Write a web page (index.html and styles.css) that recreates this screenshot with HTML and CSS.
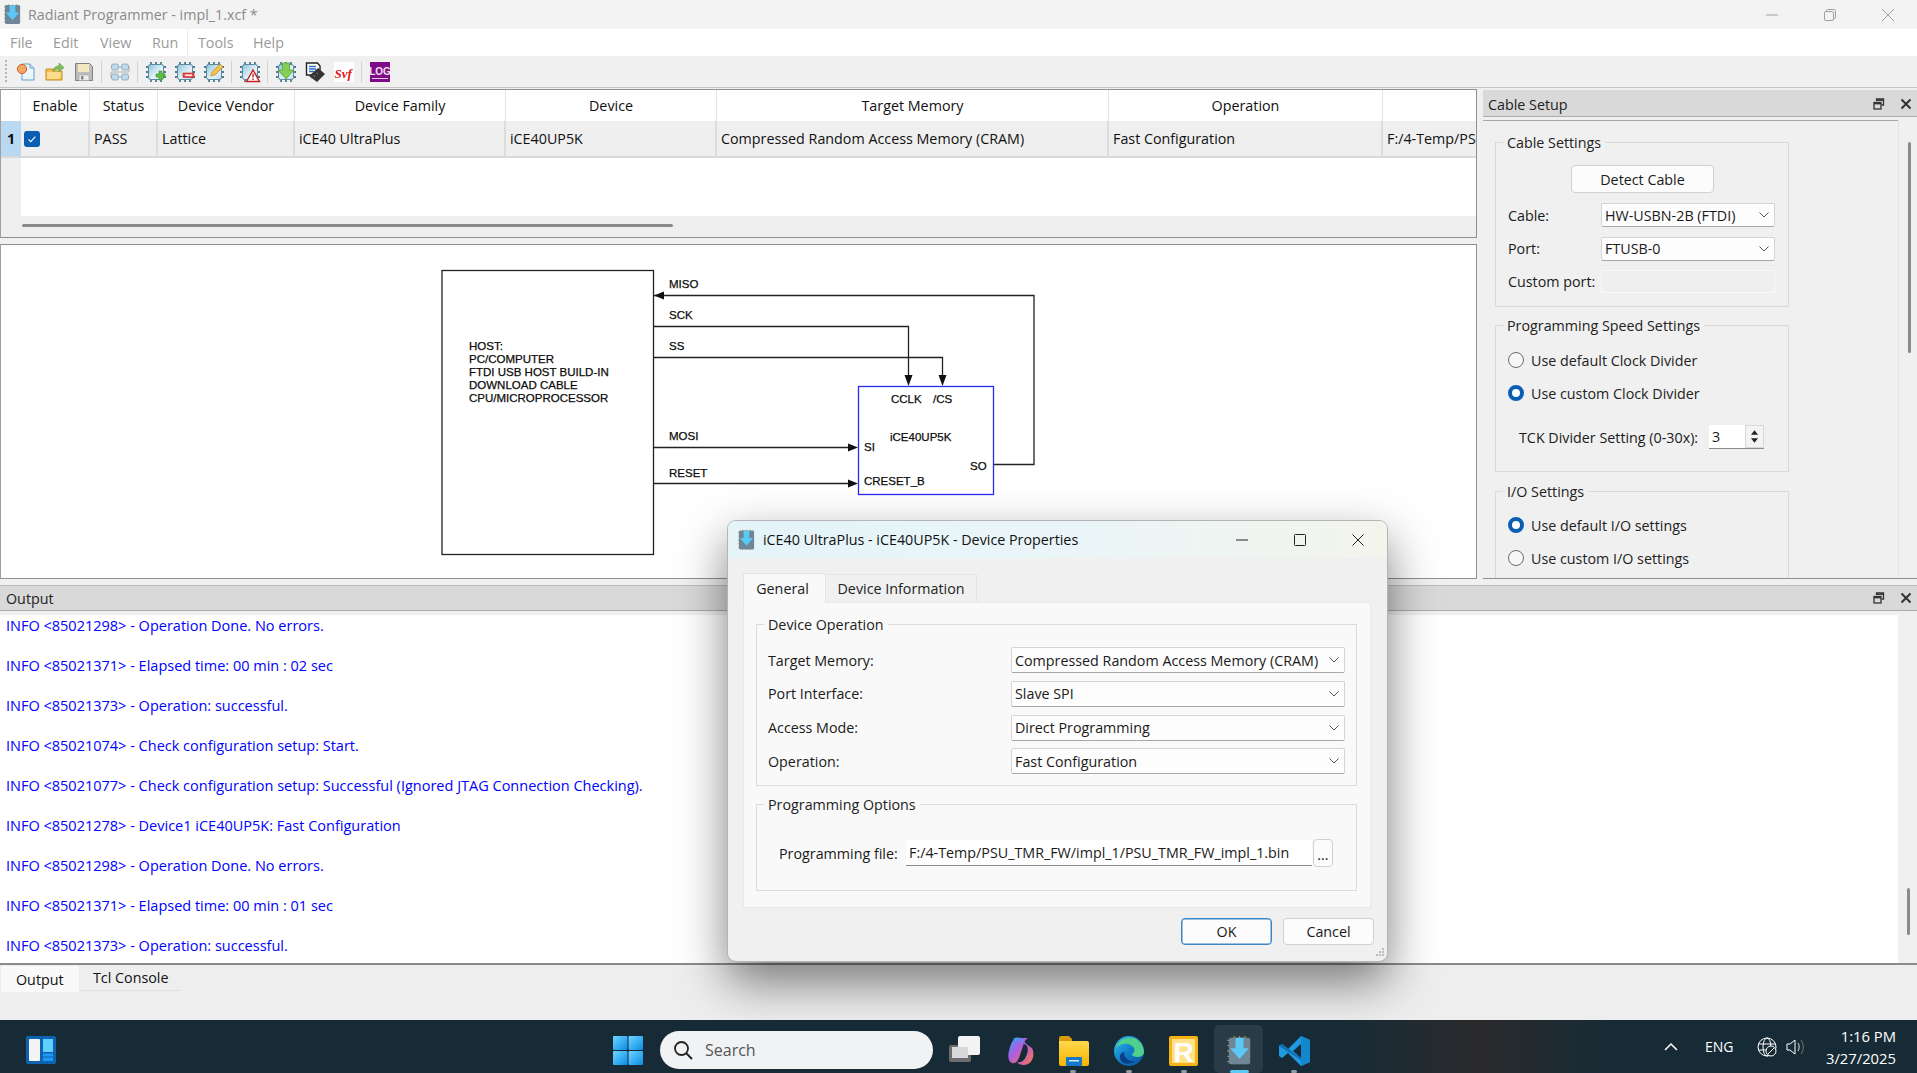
FILE: index.html
```html
<!DOCTYPE html>
<html lang="en">
<head>
<meta charset="utf-8">
<title>Radiant Programmer</title>
<link rel="stylesheet" href="styles.css">
</head>
<body>
<svg class="defs" width="0" height="0" aria-hidden="true">
  <defs>
    <linearGradient id="gChip" x1="0" y1="0" x2="1" y2="1"><stop offset="0" stop-color="#8fc4dc"/><stop offset=".6" stop-color="#e6f3f8"/><stop offset="1" stop-color="#bcdcea"/></linearGradient>
    <linearGradient id="gWin" x1="0" y1="0" x2="1" y2="1"><stop offset="0" stop-color="#6fd6ff"/><stop offset="1" stop-color="#0a8be8"/></linearGradient>
    <linearGradient id="gEdge" x1="0" y1="0" x2="1" y2="1"><stop offset="0" stop-color="#35c1f1"/><stop offset=".5" stop-color="#0f7fc8"/><stop offset="1" stop-color="#0c4f9a"/></linearGradient>
    <linearGradient id="gFolder" x1="0" y1="0" x2="0" y2="1"><stop offset="0" stop-color="#ffd84d"/><stop offset="1" stop-color="#f7b500"/></linearGradient>
    <linearGradient id="gCop" x1="0" y1="0" x2="1" y2="1"><stop offset="0" stop-color="#2ea8ff"/><stop offset=".45" stop-color="#b05be0"/><stop offset="1" stop-color="#ff7a3c"/></linearGradient>
    <symbol id="chip" viewBox="0 0 20 20">
      <path d="M5 0v3M10 0v3M15 0v3M5 17v3M10 17v3M15 17v3M0 5h3M0 10h3M0 15h3M17 5h3M17 10h3M17 15h3" stroke="#4d7d93" stroke-width="1.8" fill="none"/>
      <rect x="2.5" y="2.5" width="15" height="15" rx="2" fill="url(#gChip)" stroke="#5b8ba1"/>
    </symbol>
    <symbol id="radiant" viewBox="0 0 20 24">
      <path d="M1 4h18M1 8h18M1 12h18M1 16h18M1 20h18M6 1v22M10 1v22M14 1v22" stroke="#d6a62e" stroke-width="1" stroke-dasharray="1 1" fill="none"/>
      <rect x="2" y="2" width="16" height="20" rx="1.5" fill="#6f8699"/>
      <path d="M7 2h6v8h4l-7 8-7-8h4z" fill="#5cc8f5"/>
    </symbol>
  </defs>
</svg>

<div class="window">
  <header class="titlebar">
    <svg class="app-icon"><use href="#radiant"/></svg>
    <span class="app-title">Radiant Programmer - impl_1.xcf *</span>
    <div class="winctl">
      <svg class="winbtn" viewBox="0 0 12 12"><path d="M0 6h12" stroke="#a0a0a0" fill="none"/></svg>
      <svg class="winbtn" viewBox="0 0 12 12"><path d="M2.5 2V1.5a1 1 0 0 1 1-1h7a1 1 0 0 1 1 1v7a1 1 0 0 1-1 1H10" stroke="#a0a0a0" fill="none"/><rect x=".5" y="2.5" width="9" height="9" rx="1.5" stroke="#a0a0a0" fill="none"/></svg>
      <svg class="winbtn" viewBox="0 0 12 12"><path d="M0 0l12 12M12 0L0 12" stroke="#a0a0a0" fill="none"/></svg>
    </div>
  </header>

  <nav class="menubar">
    <span>File</span><span>Edit</span><span>View</span><span>Run</span><i class="menu-sep"></i><span>Tools</span><span>Help</span>
  </nav>

  <div class="toolbar">
    <i class="grip"></i>
    <svg class="tool" viewBox="0 0 20 20"><path d="M6 2h8l4 4v12H6z" fill="#eaf5fc" stroke="#6a9fc4"/><path d="M14 2v4h4" fill="#cfe6f5" stroke="#6a9fc4"/><circle cx="6" cy="7" r="4.6" fill="#f0a860" stroke="#d8572a"/></svg>
    <svg class="tool" viewBox="0 0 20 20"><path d="M1 7h7l2 2h7v9H1z" fill="#f6c04e" stroke="#c98a1f"/><path d="M2 10h14l-1 7H2z" fill="#fbdc8a"/><path d="M8 10c0-4 3-6 6-6V1l5 4.5L14 10V7c-3 0-5 1-6 3z" fill="#7fbf5b" stroke="#5a9a3e" stroke-width=".6"/></svg>
    <svg class="tool" viewBox="0 0 20 20"><path d="M1.5 1.5h14l3 3v14h-17z" fill="#bdbdbd" stroke="#808080"/><rect x="4" y="2" width="11" height="8" fill="#f2e9c0"/><rect x="5" y="13" width="10" height="5.500" fill="#eeeeee" stroke="#999" stroke-width=".5"/><rect x="7" y="14" width="2.500" height="3.500" fill="#888"/></svg>
    <i class="tool-sep"></i>
    <svg class="tool" viewBox="0 0 20 20"><g fill="#bcdcea" stroke="#8fb0c0"><rect x="1.500" y="2" width="7" height="6" rx="2"/><rect x="11.500" y="2" width="7" height="6" rx="2"/><rect x="1.500" y="12" width="7" height="6" rx="2"/><rect x="11.500" y="12" width="7" height="6" rx="2"/></g><path d="M8.500 5h3M8.500 15h3M19 5v5H1v5" stroke="#9a9a9a" fill="none" stroke-width=".7"/></svg>
    <i class="tool-sep"></i>
    <svg class="tool"><use href="#chip"/><path d="M13 9h3v3h3v3h-3v3h-3v-3h-3v-3h3z" fill="#5fc23c" stroke="#2f8a1c" stroke-width=".6"/></svg>
    <svg class="tool"><use href="#chip"/><rect x="8" y="11" width="11" height="4.500" fill="#e84b4b" stroke="#b82020" stroke-width=".6"/><rect x="10" y="12.500" width="7" height="1.400" fill="#fff"/></svg>
    <svg class="tool"><use href="#chip"/><path d="M7 14l1-4 8-8 3 3-8 8z" fill="#f1c04e" stroke="#b98a1f" stroke-width=".7"/></svg>
    <i class="tool-sep"></i>
    <svg class="tool"><use href="#chip"/><path d="M13 8l6.500 11.500h-13z" fill="#fff" stroke="#c62020" stroke-width="1.400"/><path d="M13 11.500v4M13 16.500v1.500" stroke="#c62020" stroke-width="1.400"/></svg>
    <i class="tool-sep"></i>
    <svg class="tool"><use href="#chip"/><path d="M6.500 1h7v7h4.500l-8 9-8-9h4.500z" fill="#84d057" stroke="#4e9a2e" stroke-width=".7"/></svg>
    <svg class="tool" viewBox="0 0 20 20"><path d="M1.500 1h11l2.500 3v9H1.500z" fill="#fff" stroke="#222" stroke-width="1.400"/><path d="M4 4.500h7M4 7h7M4 9.500h5" stroke="#2a6fd0" stroke-width="1.300"/><path d="M4 14l9-8 7 6-8 8z" fill="#333"/><path d="M5.500 15.500l1.500 2M8.500 13l1.500 2M11.500 10.500l1.500 2" stroke="#aaa" stroke-width=".7"/></svg>
    <svg class="tool" viewBox="0 0 20 20"><rect width="20" height="20" fill="#fff"/><text class="svf-text" x="0.500" y="15.500">Svf</text></svg>
    <i class="tool-sep"></i>
    <svg class="tool" viewBox="0 0 20 20"><rect width="20" height="20" fill="#800b87"/><text class="log-text" x="10" y="12.500">LOG</text><path d="M2 16.500h16" stroke="#e8c9ea"/></svg>
  </div>

  <main class="workspace">
    <div class="upper">
      <div class="left-col">
        <section class="table-panel">
          <div class="grid-table">
            <div class="hc corner"></div><div class="hc">Enable</div><div class="hc">Status</div><div class="hc">Device Vendor</div><div class="hc">Device Family</div><div class="hc">Device</div><div class="hc">Target Memory</div><div class="hc">Operation</div><div class="hc last"></div>
            <div class="rowhead">1</div>
            <div class="td check-cell"><svg class="checkbox" viewBox="0 0 16 16"><rect width="16" height="16" rx="3" fill="#0a5fb4"/><path d="M4.500 8.300l2.300 2.300 4.500-5" stroke="#fff" fill="none" stroke-width="1.100"/></svg></div>
            <div class="td">PASS</div><div class="td">Lattice</div><div class="td">iCE40 UltraPlus</div><div class="td">iCE40UP5K</div><div class="td">Compressed Random Access Memory (CRAM)</div><div class="td">Fast Configuration</div><div class="td clip">F:/4-Temp/PSU_TMR_FW/impl_1/PSU_TMR_FW_impl_1.bin</div>
          </div>
          <div class="table-empty"><div class="gutter"></div></div>
          <div class="hscroll"><div class="hthumb"></div></div>
        </section>

        <section class="diagram-panel">
          <svg class="diagram" viewBox="1 245 1475 333" width="1475" height="333">
            <g fill="none" stroke="#222" stroke-width="1.300">
              <rect x="442" y="270.500" width="211.500" height="284"/>
              <path d="M654 295.500H1034V464.500H994"/>
              <path d="M654 326.500H908.500V378"/>
              <path d="M654 357.500H942.500V378"/>
              <path d="M654 447.500H850"/>
              <path d="M654 483.500H850"/>
            </g>
            <g fill="#111">
              <path d="M654 295.500l10-4v8z"/>
              <path d="M908.500 386l-4-11h8z"/>
              <path d="M942.500 386l-4-11h8z"/>
              <path d="M858 447.500l-10-4v8z"/>
              <path d="M858 483.500l-10-4v8z"/>
            </g>
            <rect x="858.500" y="386.500" width="135" height="108" fill="#fff" stroke="#2a2af0" stroke-width="1.300"/>
            <g class="dg-text">
              <text x="669" y="288">MISO</text>
              <text x="669" y="319">SCK</text>
              <text x="669" y="350">SS</text>
              <text x="669" y="440">MOSI</text>
              <text x="669" y="477">RESET</text>
              <text x="469" y="350">HOST:</text>
              <text x="469" y="363">PC/COMPUTER</text>
              <text x="469" y="376">FTDI USB HOST BUILD-IN</text>
              <text x="469" y="389">DOWNLOAD CABLE</text>
              <text x="469" y="402">CPU/MICROPROCESSOR</text>
              <text x="891" y="403">CCLK</text>
              <text x="933" y="403">/CS</text>
              <text x="890" y="441">iCE40UP5K</text>
              <text x="864" y="451">SI</text>
              <text x="970" y="470">SO</text>
              <text x="864" y="485">CRESET_B</text>
            </g>
          </svg>
        </section>
      </div>

      <aside class="cable-panel">
        <div class="dock-head cable-head">
          <span class="dock-title">Cable Setup</span>
          <svg class="dock-ico"><use href="#dockRestore"/></svg>
          <svg class="dock-ico"><use href="#dockClose"/></svg>
        </div>
        <div class="cable-body">
          <div class="cable-scroll">
            <fieldset class="group g-cable">
              <legend>Cable Settings</legend>
              <button class="btn detect">Detect Cable</button>
              <div class="field"><label>Cable:</label><div class="combo small"><span>HW-USBN-2B (FTDI)</span><svg class="chev" viewBox="0 0 10 6"><path d="M.5.500L5 5 9.500.500" fill="none" stroke="#555"/></svg></div></div>
              <div class="field"><label>Port:</label><div class="combo small"><span>FTUSB-0</span><svg class="chev" viewBox="0 0 10 6"><path d="M.5.500L5 5 9.500.500" fill="none" stroke="#555"/></svg></div></div>
              <div class="field last-field"><label>Custom port:</label><div class="disabled-input"></div></div>
            </fieldset>
            <fieldset class="group g-speed">
              <legend>Programming Speed Settings</legend>
              <div class="radio"><i class="dot"></i>Use default Clock Divider</div>
              <div class="radio"><i class="dot on"></i>Use custom Clock Divider</div>
              <div class="tck"><span>TCK Divider Setting (0-30x):</span>
                <div class="spin"><span class="spin-val">3</span><div class="spin-btns"><svg viewBox="0 0 8 5"><path d="M4 0l4 5H0z" fill="#222"/></svg><svg viewBox="0 0 8 5"><path d="M4 5L0 0h8z" fill="#222"/></svg></div></div>
              </div>
            </fieldset>
            <fieldset class="group g-io">
              <legend>I/O Settings</legend>
              <div class="radio"><i class="dot on"></i>Use default I/O settings</div>
              <div class="radio"><i class="dot"></i>Use custom I/O settings</div>
            </fieldset>
          </div>
          <div class="vtrack"><div class="vthumb"></div></div>
        </div>
      </aside>
    </div>

    <section class="output-dock">
      <div class="dock-head output-head">
        <span class="dock-title">Output</span>
        <svg class="dock-ico" viewBox="0 0 12 12"><use href="#dockRestore"/></svg>
        <svg class="dock-ico" viewBox="0 0 12 12"><use href="#dockClose"/></svg>
      </div>
      <div class="output-body">
        <div class="log">
          <p>INFO &lt;85021298&gt; - Operation Done. No errors.</p>
          <p>INFO &lt;85021371&gt; - Elapsed time: 00 min : 02 sec</p>
          <p>INFO &lt;85021373&gt; - Operation: successful.</p>
          <p>INFO &lt;85021074&gt; - Check configuration setup: Start.</p>
          <p>INFO &lt;85021077&gt; - Check configuration setup: Successful (Ignored JTAG Connection Checking).</p>
          <p>INFO &lt;85021278&gt; - Device1 iCE40UP5K: Fast Configuration</p>
          <p>INFO &lt;85021298&gt; - Operation Done. No errors.</p>
          <p>INFO &lt;85021371&gt; - Elapsed time: 00 min : 01 sec</p>
          <p>INFO &lt;85021373&gt; - Operation: successful.</p>
        </div>
        <div class="vtrack log-track"><div class="vthumb"></div></div>
      </div>
    </section>
    <div class="bottom-tabs">
      <div class="btab active">Output</div>
      <div class="btab">Tcl Console</div>
    </div>
  </main>

  <footer class="taskbar">
    <svg class="tb widgets" viewBox="0 0 30 28"><rect width="30" height="28" rx="2" fill="#0f62b0"/><rect x="3" y="3" width="11" height="22" rx="1" fill="#f2f4f6"/><rect x="17" y="3" width="10" height="13" fill="#5fcffb"/><rect x="17" y="17.500" width="10" height="3" fill="#1b9aef"/><rect x="17" y="21.500" width="10" height="3.500" fill="#1b9aef"/></svg>
    <svg class="tb winlogo" viewBox="0 0 30 29"><rect width="14.500" height="14" rx="1" fill="url(#gWin)"/><rect x="15.500" width="14.500" height="14" rx="1" fill="url(#gWin)"/><rect y="15" width="14.500" height="14" rx="1" fill="url(#gWin)"/><rect x="15.500" y="15" width="14.500" height="14" rx="1" fill="url(#gWin)"/></svg>
    <div class="searchbox">
      <svg class="search-ico" viewBox="0 0 20 20"><circle cx="8.500" cy="8.500" r="6.500" fill="none" stroke="#222" stroke-width="1.800"/><path d="M13 13l6 6" stroke="#222" stroke-width="2"/></svg>
      <span>Search</span>
    </div>
    <svg class="tb taskview" viewBox="0 0 31 26"><rect y="9" width="22" height="17" rx="2" fill="#6c6c6c"/><rect x="9" width="22" height="19" rx="2" fill="#f3f3f3"/><rect x="3" y="11" width="16" height="11" fill="#d8d8d8"/></svg>
    <svg class="tb copilot" viewBox="0 0 30 30"><path d="M14 2c-5 0-7 3-9 9-2 7-3 14 2 16 4 1 6-2 8-8l3-9c1-4 2-6 5-8z" fill="url(#gCop)"/><path d="M8 3c3-2 8-2 10 1 3 4 6 6 9 8 3 6 1 14-4 16-4 2-9 1-11-2 5 1 8-2 10-8s0-10-4-10z" fill="url(#gCop)"/></svg>
    <svg class="tb folder" viewBox="0 0 30 30"><path d="M0 2a2 2 0 0 1 2-2h8l3 3h0v3H0z" fill="#d89a06"/><path d="M0 5h28a2 2 0 0 1 2 2v21a2 2 0 0 1-2 2H2a2 2 0 0 1-2-2z" fill="url(#gFolder)"/><rect x="7" y="21" width="16" height="9" rx="1" fill="#1578c8"/><rect x="10" y="24" width="10" height="1.500" fill="#cfe8fa"/></svg>
    <svg class="tb edge" viewBox="0 0 30 30"><circle cx="15" cy="15" r="15" fill="url(#gEdge)"/><path d="M2 12C5 3 13 0 20 2c6 2 10 8 10 14 0 3-3 5-7 5-3 0-5-1-5-3 2-1 3-3 2-6-2-4-7-5-11-4-3 1-5 2-7 4z" fill="#4fd08c"/><path d="M10 16c0 6 5 10 11 9-3 3-9 4-13 1-3-3-3-9 2-10z" fill="#0b3f88"/></svg>
    <svg class="tb rapp" viewBox="0 0 29 30"><rect width="29" height="30" rx="2" fill="#f6b313"/><rect x="3" y="3" width="23" height="24" fill="#ffe28a"/><text class="r-text" x="14.500" y="25.500">R</text></svg>
    <div class="tile"><svg class="tile-ico"><use href="#radiant"/></svg><i class="active-bar"></i></div>
    <svg class="tb vscode" viewBox="0 0 31 30"><path d="M22 0l9 4v22l-9 4L9 17l-6 5-3-2v-10l3-2 6 5z" fill="#1f9ae0"/><path d="M22 8l-8 7 8 7z" fill="#172b36"/><path d="M22 0v30l9-4V4z" fill="#1587cf"/><path d="M3 8l19 14v2L0 10z" fill="#0f6fb4"/></svg>
    <i class="run-dot d1"></i><i class="run-dot d2"></i><i class="run-dot d3"></i><i class="run-dot d4"></i>
    <div class="tray">
      <svg class="tray-chev" viewBox="0 0 14 9"><path d="M1 8l6-6 6 6" fill="none" stroke="#fff" stroke-width="1.500"/></svg>
      <span class="eng">ENG</span>
      <svg class="tray-ico" viewBox="0 0 20 20"><circle cx="10" cy="10" r="9" fill="none" stroke="#fff"/><ellipse cx="10" cy="10" rx="4" ry="9" fill="none" stroke="#fff"/><path d="M1 7h18M1 13h18" stroke="#fff"/><circle cx="14" cy="14" r="5" fill="#172b36" stroke="#fff"/><path d="M11 17l6-6" stroke="#fff"/></svg>
      <svg class="tray-ico spk" viewBox="0 0 20 20"><path d="M2 7h3l5-4v14l-5-4H2z" fill="none" stroke="#fff"/><path d="M13 6c1.500 2 1.500 6 0 8" fill="none" stroke="#ddd"/><path d="M16 3c3 4 3 10 0 14" fill="none" stroke="#777"/></svg>
      <div class="clock"><span>1:16 PM</span><span>3/27/2025</span></div>
    </div>
  </footer>

  <svg class="defs" width="0" height="0" aria-hidden="true">
    <symbol id="dockRestore" viewBox="0 0 12 12"><path d="M3.500 3V1h7v6H8.500" fill="none" stroke="#333" stroke-width="1.300"/><path d="M3.500 2.200h7" stroke="#333" stroke-width="1.500"/><rect x="1" y="4.500" width="7" height="6.500" fill="none" stroke="#333" stroke-width="1.300"/><path d="M1 5.600h7" stroke="#333" stroke-width="1.500"/></symbol>
    <symbol id="dockClose" viewBox="0 0 12 12"><path d="M1.500 1.500l9 9M10.500 1.500l-9 9" stroke="#333" stroke-width="2"/></symbol>
  </svg>

  <div class="dialog">
    <div class="dlg-title">
      <svg class="dlg-icon"><use href="#radiant"/></svg>
      <span class="dlg-name">iCE40 UltraPlus - iCE40UP5K - Device Properties</span>
      <div class="dlg-ctl">
        <svg class="dlg-btn" viewBox="0 0 12 12"><path d="M0 6h12" stroke="#222" fill="none"/></svg>
        <svg class="dlg-btn" viewBox="0 0 12 12"><rect x=".5" y=".5" width="11" height="11" rx="1" fill="none" stroke="#222"/></svg>
        <svg class="dlg-btn" viewBox="0 0 12 12"><path d="M.5.500l11 11M11.500.500l-11 11" stroke="#222" fill="none"/></svg>
      </div>
    </div>
    <div class="dlg-body">
      <div class="tabs">
        <div class="tab on">General</div>
        <div class="tab">Device Information</div>
      </div>
      <div class="tab-panel">
        <fieldset class="group d-op">
          <legend>Device Operation</legend>
          <div class="d-field"><label>Target Memory:</label><div class="combo wide"><span>Compressed Random Access Memory (CRAM)</span><svg class="chev" viewBox="0 0 10 6"><path d="M.5.500L5 5 9.500.500" fill="none" stroke="#555"/></svg></div></div>
          <div class="d-field"><label>Port Interface:</label><div class="combo wide"><span>Slave SPI</span><svg class="chev" viewBox="0 0 10 6"><path d="M.5.500L5 5 9.500.500" fill="none" stroke="#555"/></svg></div></div>
          <div class="d-field"><label>Access Mode:</label><div class="combo wide"><span>Direct Programming</span><svg class="chev" viewBox="0 0 10 6"><path d="M.5.500L5 5 9.500.500" fill="none" stroke="#555"/></svg></div></div>
          <div class="d-field"><label>Operation:</label><div class="combo wide"><span>Fast Configuration</span><svg class="chev" viewBox="0 0 10 6"><path d="M.5.500L5 5 9.500.500" fill="none" stroke="#555"/></svg></div></div>
        </fieldset>
        <fieldset class="group d-prog">
          <legend>Programming Options</legend>
          <div class="file-row">
            <label>Programming file:</label>
            <div class="file-input">F:/4-Temp/PSU_TMR_FW/impl_1/PSU_TMR_FW_impl_1.bin</div>
            <button class="btn browse">...</button>
          </div>
        </fieldset>
      </div>
      <div class="dlg-actions">
        <button class="btn primary">OK</button>
        <button class="btn action">Cancel</button>
      </div>
    </div>
    <svg class="resize-grip" viewBox="0 0 10 10"><path d="M8 0h2v2H8zM5 3h2v2H5zM8 3h2v2H8zM2 6h2v2H2zM5 6h2v2H5zM8 6h2v2H8z" fill="#bbb"/></svg>
  </div>
</div>
</body>
</html>
```

FILE: styles.css
```css
* { box-sizing: border-box; }
html, body { margin: 0; padding: 0; }
body {
  width: 1917px;
  height: 1073px;
  overflow: hidden;
  font-family: "Open Sans", "Noto Sans", "Liberation Sans", sans-serif;
  font-size: 14.3px;
  color: #1a1a1a;
  background: #f0f0f0;
}
.defs { position: absolute; }
.window { position: relative; width: 1917px; height: 1073px; display: flex; flex-direction: column; overflow: hidden; }

/* Title bar */
.titlebar { height: 29px; flex: none; display: flex; align-items: center; background: #f3f3f3; padding-left: 3px; }
.app-icon { width: 19px; height: 23px; }
.app-title { margin-left: 6px; color: #8a8a8a; }
.winctl { margin-left: auto; display: flex; gap: 46px; padding-right: 23px; }
.winbtn { width: 12px; height: 12px; }

/* Menu */
.menubar { height: 27px; flex: none; background: #fff; display: grid; grid-template-columns: 43px 47px 52px 35px 11px 55px auto; align-items: center; padding-left: 10px; color: #9a9a9a; }
.menu-sep { display: block; width: 1px; height: 27px; background: #ececec; }

/* Toolbar */
.toolbar { height: 32px; flex: none; background: #f0f0f0; border-bottom: 1px solid #c4c4c4; display: flex; align-items: center; padding-left: 5px; }
.grip { width: 2px; height: 24px; margin-right: 9px; background: repeating-linear-gradient(#b5b5b5 0 2px, transparent 2px 4px); }
.tool { width: 20px; height: 20px; margin-right: 9px; flex: none; overflow: visible; }
.tool-sep { width: 1px; height: 22px; margin: 0 8px 0 -2px; background: #d2d2d2; }
.svf-text { font: italic bold 13px "Liberation Serif", serif; fill: #e0141c; }
.log-text { font: bold 10px "Liberation Sans", sans-serif; fill: #f0e0f2; text-anchor: middle; }

/* Workspace */
.workspace { flex: 1; min-height: 0; display: flex; flex-direction: column; }
.upper { height: 497px; flex: none; display: flex; gap: 6px; padding-top: 1px; }
.left-col { width: 1477px; flex: none; display: flex; flex-direction: column; gap: 6px; }

/* Device table */
.table-panel { height: 149px; flex: none; border: 1px solid #8b8f97; border-left-color: #a0a0a0; background: #fff; display: flex; flex-direction: column; }
.grid-table { display: grid; grid-template-columns: 20px 69px 68px 137px 211px 211px 392px 274px 93px; grid-template-rows: 31px 37px; }
.hc { display: flex; align-items: center; justify-content: center; border-right: 1px solid #e3e3e3; color: #111; background: #fff; }
.hc.last { border-right: 0; }
.rowhead { background: #b9d9f2; border-bottom: 2px solid #d8d8d8; font-weight: 700; display: flex; align-items: center; justify-content: center; color: #111; }
.td { background: #efefef; border-right: 2px solid #dcdcdc; border-bottom: 2px solid #d8d8d8; padding-left: 4px; display: flex; align-items: center; white-space: nowrap; overflow: hidden; color: #111; }
.td.clip { border-right: 0; }
.check-cell { padding-left: 3px; }
.checkbox { width: 16px; height: 16px; }
.table-empty { height: 58px; flex: none; display: flex; }
.gutter { width: 20px; background: #efefef; }
.hscroll { flex: 1; background: #efefef; padding: 8px 0 0 21px; }
.hthumb { width: 651px; height: 3px; border-radius: 2px; background: #8a8a8a; }

/* Diagram */
.diagram-panel { height: 335px; flex: none; background: #fff; border: 1px solid #8b8f97; border-left-color: #a0a0a0; overflow: hidden; }
.diagram { display: block; }
.dg-text text { font: 11.500px "Liberation Sans", sans-serif; fill: #0c0c0c; stroke: #0c0c0c; stroke-width: .25px; }

/* Dock headers */
.dock-head { display: flex; align-items: center; background: #d9d9d9; border-bottom: 1px solid #ababab; }
.dock-title { flex: 1; color: #222; }
.dock-ico { width: 12px; height: 12px; }
.cable-head { height: 27px; margin-top: 1px; padding: 2px 5px 0 5px; gap: 15px; }
.output-head { height: 26px; flex: none; border-top: 1px solid #bbb; padding: 0 5px 0 6px; gap: 15px; }

/* Cable setup */
.cable-panel { width: 434px; flex: none; height: 490px; display: flex; flex-direction: column; }
.cable-body { flex: 1; min-height: 0; display: flex; border-top: 3px solid #f0f0f0; box-shadow: inset 0 1px 0 #a8a8a8; border-bottom: 1px solid #8b8f97; overflow: hidden; }
.cable-scroll { width: 415px; padding: 12px 0 0 12px; display: flex; flex-direction: column; overflow: hidden; }
.vtrack { width: 19px; flex: none; border-left: 1px solid #e4e4e4; background: #f0f0f0; padding: 22px 0 0 9px; }
.vthumb { width: 3px; height: 211px; border-radius: 2px; background: #8a8a8a; }

.group { margin: 0; border: 1px solid #d9d9d9; padding: 0; min-width: 0; }
.group legend { margin-left: -5px; padding: 0 4px; height: 21px; line-height: 21px; color: #222; }
.g-cable { width: 294px; height: 175px; padding: 12px 12px 0; margin-bottom: 8px; flex: none; }
.g-speed { width: 294px; height: 157px; padding: 14px 12px 0; margin-bottom: 9px; flex: none; }
.g-io { width: 294px; height: 130px; padding: 13px 12px 0; flex: none; }

.btn { font: inherit; color: #1a1a1a; background: #fcfcfc; border: 1px solid #d0d0d0; border-radius: 4px; padding: 0; }
.detect { display: block; width: 143px; height: 28px; margin: 0 0 10px 63px; }
.field { display: flex; align-items: center; height: 24px; margin-bottom: 9.500px; }
.field label { width: 93px; flex: none; white-space: nowrap; }
.last-field { margin-top: 1px; height: 23px; }
.combo { display: flex; align-items: center; justify-content: space-between; background: #fdfdfd; border: 1px solid #d4d4d4; border-bottom-color: #a8a8a8; border-radius: 2px; padding: 0 5px 0 3px; white-space: nowrap; }
.small { width: 174px; height: 24px; }
.chev { width: 10px; height: 6px; flex: none; }
.disabled-input { width: 174px; height: 23px; background: #efefef; border: 1px solid #f8f8f8; }

.radio { display: flex; align-items: center; height: 20px; margin-bottom: 13px; white-space: nowrap; color: #222; }
.dot { width: 16px; height: 16px; flex: none; margin-right: 7px; border-radius: 50%; border: 1px solid #6b6b6b; background: #f7f7f7; }
.dot.on { border: 4.500px solid #0a5fb4; background: #fff; }
.tck { display: flex; align-items: center; height: 24px; margin: 22px 0 0 11px; white-space: nowrap; }
.tck > span { width: 190px; flex: none; }
.spin { width: 55px; height: 24px; display: flex; background: #fff; border-bottom: 1px solid #8a8a8a; }
.spin-val { flex: 1; padding-left: 3px; line-height: 23px; }
.spin-btns { width: 19px; flex: none; display: flex; flex-direction: column; padding: 2px 0; background: #f4f4f4; border: 1px solid #d8d8d8; align-items: center; justify-content: space-around; }
.spin-btns svg { width: 7px; height: 5px; }

/* Output */
.output-dock { height: 380px; flex: none; display: flex; flex-direction: column; border-bottom: 2px solid #8a8a8a; }
.output-body { flex: 1; min-height: 0; display: flex; padding-top: 4px; background: #f0f0f0; }
.log { flex: 1; background: #fff; padding: 1px 0 0 6px; overflow: hidden; font-size: 14.500px; }
.log p { margin: 0 0 20.020px; line-height: 20px; color: #0000ff; white-space: nowrap; }
.log-track { border-left: 0; padding-top: 273px; }
.log-track .vthumb { height: 47px; }

/* Bottom tabs */
.bottom-tabs { flex: 1; display: flex; align-items: flex-start; background: #eeeeee; }
.btab { width: 100px; height: 26px; display: flex; align-items: center; padding-left: 13px; border-bottom: 1px solid #e0e0e0; color: #111; }
.btab.active { width: 80px; height: 28px; padding-left: 15px; background: #f9f9f9; border: 1px solid #ececec; }

/* Taskbar */
.taskbar { position: relative; z-index: 5; height: 53px; flex: none; background: linear-gradient(90deg, #172b36 0 70%, #2a2a2c 77%, #172b36 84%); }
.tb { position: absolute; top: 16px; height: 28px; }
.widgets { left: 26px; width: 30px; }
.winlogo { left: 613px; width: 30px; height: 29px; }
.searchbox { position: absolute; left: 660px; top: 11px; width: 273px; height: 38px; border-radius: 19px; background: #f0f2f4; display: flex; align-items: center; padding-left: 13px; color: #555; font-size: 16px; }
.search-ico { width: 20px; height: 20px; margin-right: 12px; }
.taskview { left: 949px; top: 16px; width: 31px; height: 26px; }
.copilot { left: 1005px; width: 30px; height: 30px; }
.folder { left: 1059px; width: 30px; height: 30px; }
.edge { left: 1114px; width: 30px; height: 30px; }
.rapp { left: 1169px; width: 29px; height: 30px; }
.r-text { font: bold 28px "Liberation Sans", sans-serif; fill: #fff; text-anchor: middle; }
.vscode { left: 1279px; width: 31px; height: 30px; }
.tile { position: absolute; left: 1214px; top: 5px; width: 49px; height: 48px; border-radius: 5px; background: #283b46; }
.tile-ico { position: absolute; left: 12px; top: 10px; width: 27px; height: 32px; }
.active-bar { position: absolute; left: 16px; bottom: 0; width: 19px; height: 3px; border-radius: 2px; background: #5cc8f5; }
.run-dot { position: absolute; bottom: 0; width: 6px; height: 3px; border-radius: 2px; background: #8e9aa2; }
.d1 { left: 1070px; } .d2 { left: 1126px; } .d3 { left: 1181px; } .d4 { left: 1291px; }
.tray { position: absolute; left: 1664px; right: 21px; top: 0; height: 53px; display: flex; align-items: center; color: #fff; }
.tray-chev { width: 14px; height: 9px; margin-right: 27px; }
.eng { width: 52px; font-size: 14px; }
.tray-ico { width: 20px; height: 20px; margin-right: 8px; }
.spk { margin-right: 0; }
.clock { margin-left: auto; padding-top: 2px; display: flex; flex-direction: column; align-items: flex-end; gap: 3px; font-size: 14.800px; line-height: 19px; }

/* Dialog */
.dialog { position: absolute; left: 727px; top: 520px; width: 661px; height: 442px; z-index: 3; background: #f0f0f0; border: 1px solid #b4b4b4; border-radius: 9px; box-shadow: 0 20px 48px rgba(0,0,0,.5); overflow: hidden; }
.dlg-title { height: 37px; display: flex; align-items: center; padding-left: 9px; background: linear-gradient(90deg, #e4f4f9, #eaf5f8 50%, #f3f4ec); }
.dlg-icon { width: 19px; height: 24px; }
.dlg-name { margin-left: 7px; color: #111; }
.dlg-ctl { margin-left: auto; display: flex; gap: 46px; padding-right: 23px; }
.dlg-btn { width: 12px; height: 12px; }
.dlg-body { padding: 15px 13px 0 15px; }
.tabs { display: flex; align-items: flex-end; height: 29px; }
.tab { width: 152px; height: 28px; display: flex; align-items: center; justify-content: center; border: 1px solid #e4e4e4; border-bottom: 0; color: #222; }
.tab.on { width: 82px; height: 30px; margin-bottom: -1px; padding-right: 4px; position: relative; z-index: 1; background: #f9f9f9; border-right: 0; }
.tab-panel { width: 628px; height: 306px; background: #f9f9f9; border: 1px solid #e8e8e8; padding: 11px 13px 0 12px; }
.d-op { height: 172px; padding: 12px 11px 0 11px; margin-bottom: 8px; border-color: #dcdcdc; }
.d-op legend { margin-left: -4px; }
.d-prog { height: 97px; padding: 25px 0 0 22px; border-color: #dcdcdc; }
.d-prog legend { margin-left: -15px; }
.d-field { display: flex; align-items: center; height: 26px; margin-bottom: 7.800px; }
.d-field label { width: 243px; flex: none; white-space: nowrap; }
.wide { flex: 1; height: 26px; }
.file-row { display: flex; align-items: flex-start; }
.file-row label { width: 127px; flex: none; white-space: nowrap; line-height: 27px; }
.file-input { width: 406px; height: 26px; line-height: 25px; padding-left: 3px; background: #fff; border-bottom: 1px solid #8a8a8a; white-space: nowrap; overflow: hidden; }
.browse { width: 20px; height: 28px; margin: -1px 0 0 1px; line-height: 30px; }
.dlg-actions { display: flex; justify-content: flex-end; gap: 11px; margin-top: 10px; }
.action, .primary { width: 91px; height: 27px; }
.primary { border: 1px solid #3d86c6; box-shadow: inset 0 0 0 0.5px #3d86c6; }
.resize-grip { position: absolute; right: 3px; bottom: 3px; width: 10px; height: 10px; }
```
